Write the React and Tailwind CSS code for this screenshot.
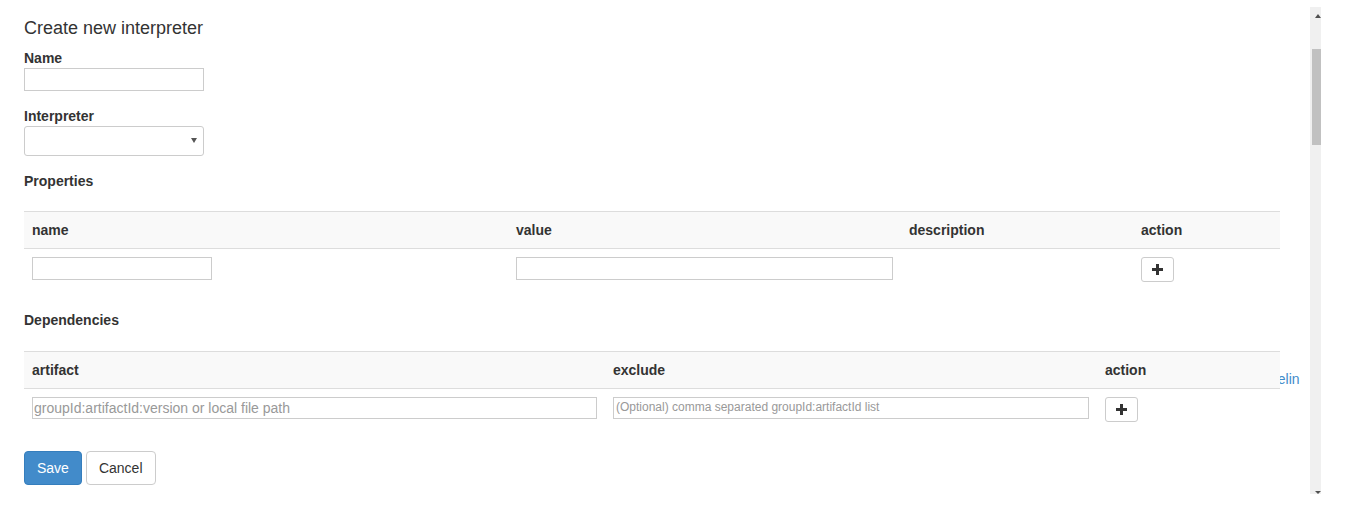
import React from "react";

// thick "plus" like the glyphicon used in the action column
function PlusIcon() {
  return (
    <svg width="11" height="11" viewBox="0 0 11 11" fill="#333">
      <rect x="4" y="0" width="3" height="11" />
      <rect x="0" y="4" width="11" height="3" />
    </svg>
  );
}

function AddButton() {
  return (
    <button
      type="button"
      className="flex h-[25px] w-[33px] items-center justify-center rounded-[3px] border border-[#ccc] bg-white"
    >
      <PlusIcon />
    </button>
  );
}

function PropertiesTable() {
  return (
    <div className="mt-[20px] w-[1256px]">
      <div className="grid grid-cols-[484px_393px_232px_147px] border-y border-[#ddd] bg-[#f9f9f9] font-bold leading-[20px]">
        <div className="p-[8px]">name</div>
        <div className="p-[8px]">value</div>
        <div className="p-[8px]">description</div>
        <div className="p-[8px]">action</div>
      </div>
      <div className="grid grid-cols-[484px_393px_232px_147px] items-start">
        <div className="p-[8px]">
          <input className="block h-[23px] w-[180px] border border-[#ccc] bg-white" />
        </div>
        <div className="p-[8px]">
          <input className="block h-[23px] w-[377px] border border-[#ccc] bg-white" />
        </div>
        <div className="p-[8px]" />
        <div className="p-[8px]">
          <AddButton />
        </div>
      </div>
    </div>
  );
}

function DependenciesTable() {
  return (
    <div className="relative z-10 mt-[21px] w-[1256px]">
      <div className="grid grid-cols-[581px_492px_183px] border-y border-[#ddd] bg-[#f9f9f9] font-bold leading-[20px]">
        <div className="p-[8px]">artifact</div>
        <div className="p-[8px]">exclude</div>
        <div className="p-[8px]">action</div>
      </div>
      <div className="grid grid-cols-[581px_492px_183px] items-start">
        <div className="p-[8px]">
          <input
            placeholder="groupId:artifactId:version or local file path"
            className="block h-[22px] w-[565px] border border-[#ccc] bg-white px-px text-[14px] placeholder:text-[#999]"
          />
        </div>
        <div className="p-[8px]">
          <input
            placeholder="(Optional) comma separated groupId:artifactId list"
            className="block h-[22px] w-[476px] border border-[#ccc] bg-white px-[2px] pb-[3px] text-[12px] placeholder:text-[#999]"
          />
        </div>
        <div className="p-[8px]">
          <AddButton />
        </div>
      </div>
    </div>
  );
}

function Scrollbar() {
  return (
    <div className="mt-[7px] flex h-[487px] w-[11px] flex-col bg-[#f0f0f0]">
      <div className="h-[42px] pl-[5px] pt-[7px]">
        <svg width="6" height="4" viewBox="0 0 6 4" fill="#505050">
          <polygon points="3,0 6,4 0,4" />
        </svg>
      </div>
      <div className="ml-[2px] h-[96px] w-[9px] bg-[#c1c1c1]" />
      <div className="flex-1" />
      <div className="pl-[5px]">
        <svg width="6" height="3" viewBox="0 0 6 3" fill="#505050">
          <polygon points="0,0 6,0 3,3" />
        </svg>
      </div>
    </div>
  );
}

export default function App() {
  return (
    <div className="relative h-[512px] w-[1366px] overflow-hidden bg-white font-['Liberation_Sans',Arial,sans-serif] text-[14px] text-[#333]">
      <div className="flex">
        <div className="w-[1310px] pl-[24px] pt-[18px]">
          <h4 className="text-[18px] leading-[20px] font-normal">
            Create new interpreter
          </h4>

          <div className="mt-[10px]">
            <label className="block font-bold leading-[20px]">Name</label>
            <input className="block h-[23px] w-[180px] border border-[#ccc] bg-white" />
          </div>

          <div className="mt-[15px]">
            <label className="block font-bold leading-[20px]">Interpreter</label>
            <div className="relative h-[30px] w-[180px]">
              <select className="block h-[30px] w-[180px] appearance-none rounded-[3px] border border-[#ccc] bg-white" />
              <svg
                className="pointer-events-none absolute left-[167px] top-[12px]"
                width="6"
                height="5"
                viewBox="0 0 6 5"
                fill="#555"
              >
                <polygon points="0,0 6,0 3,5" />
              </svg>
            </div>
          </div>

          <div className="mt-[15px] font-bold leading-[20px]">Properties</div>
          <PropertiesTable />

          <div className="mt-[20px] font-bold leading-[20px]">Dependencies</div>
          <DependenciesTable />

          <div className="mt-[21px] flex gap-[4px]">
            <button
              type="button"
              className="h-[34px] rounded-[4px] border border-[#357ebd] bg-[#428bca] px-[12px] leading-[20px] text-white"
            >
              Save
            </button>
            <button
              type="button"
              className="h-[34px] rounded-[4px] border border-[#ccc] bg-white px-[12px] leading-[20px] text-[#333]"
            >
              Cancel
            </button>
          </div>
        </div>
        <Scrollbar />
      </div>

      {/* link peeking out from behind the dependencies table */}
      <span className="absolute left-[1270px] top-[369px] text-[14px] leading-[20px] text-[#428bca]">
        pelin
      </span>
    </div>
  );
}
